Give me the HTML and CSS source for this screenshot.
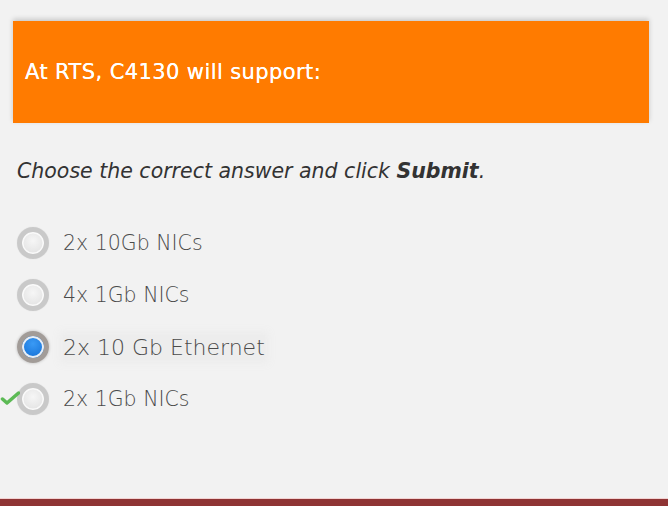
FILE: index.html
```html
<!DOCTYPE html>
<html>
<head>
<meta charset="utf-8">
<link rel="stylesheet" href="styles.css">
</head>
<body>
<div class="page">
  <div class="question">At RTS, C4130 will support:</div>
  <p class="instruction">Choose the correct answer and click <b>Submit</b>.</p>
  <ul class="options">
    <li class="option"><span class="radio"></span><span class="label">2x 10Gb NICs</span></li>
    <li class="option"><span class="radio"></span><span class="label">4x 1Gb NICs</span></li>
    <li class="option selected"><span class="radio"></span><span class="label">2x 10 Gb Ethernet</span></li>
    <li class="option correct"><svg class="check" width="20" height="14" viewBox="0 0 20 14"><path d="M2.5 8 L7 12 L18.5 2" fill="none" stroke="#5cba55" stroke-width="3.5" stroke-linecap="round" stroke-linejoin="round"/></svg><span class="radio"></span><span class="label">2x 1Gb NICs</span></li>
  </ul>
  <div class="footer"></div>
</div>
</body>
</html>
```
FILE: styles.css
```css
html, body {
  margin: 0;
  padding: 0;
  background: #f2f2f2;
}
.page {
  height: 506px;
  display: flex;
  flex-direction: column;
  font-family: "DejaVu Sans", sans-serif;
}
.question {
  margin: 21px 19px 0 13px;
  height: 102px;
  background: #ff7b00;
  color: #fff;
  font-size: 21px;
  font-weight: 400;
  letter-spacing: 0.4px;
  padding-left: 12px;
  display: flex;
  align-items: center;
  box-shadow: 0 -2px 5px rgba(0, 0, 0, 0.18);
  text-shadow: 0 0 0.5px #fff;
}
.instruction {
  margin: 35px 0 0 17px;
  font-size: 20.5px;
  font-style: italic;
  font-weight: 200;
  color: #333;
  line-height: 26px;
}
.instruction b {
  font-weight: 700;
}
.options {
  list-style: none;
  margin: 43px 0 0 0;
  padding: 0;
  display: flex;
  flex-direction: column;
  gap: 20px;
}
.option {
  position: relative;
  display: flex;
  align-items: center;
  height: 32px;
  padding-left: 17px;
}
.radio {
  width: 22px;
  height: 22px;
  border-radius: 50%;
  border: 5px solid #c9c9c9;
  background: radial-gradient(circle at 50% 40%, #f6f6f6 0%, #e4e4e4 75%);
  box-shadow: inset 0 0 0 1.5px #fafafa, 0 0 1px rgba(0,0,0,0.15);
  flex: none;
}
.selected .radio {
  border-color: #a29c98;
  background: radial-gradient(circle at 50% 35%, #3a9af5 0%, #1b78dc 70%, #1566c4 100%);
  box-shadow: inset 0 0 0 2px #e8eef5, 0 0 3px rgba(0,0,0,0.25);
}
.label {
  margin-left: 14px;
  font-size: 20.5px;
  font-weight: 200;
  color: #4a4a4a;
}
.selected .label {
  font-size: 22px;
  background: #ededed;
  box-shadow: 0 0 8px 4px #ededed;
}
.check {
  position: absolute;
  left: 0;
  top: 8px;
}
.footer {
  margin-top: auto;
  height: 7px;
  background: #8f3434;
  border-top: 1px solid #f2d2d2;
}
```
